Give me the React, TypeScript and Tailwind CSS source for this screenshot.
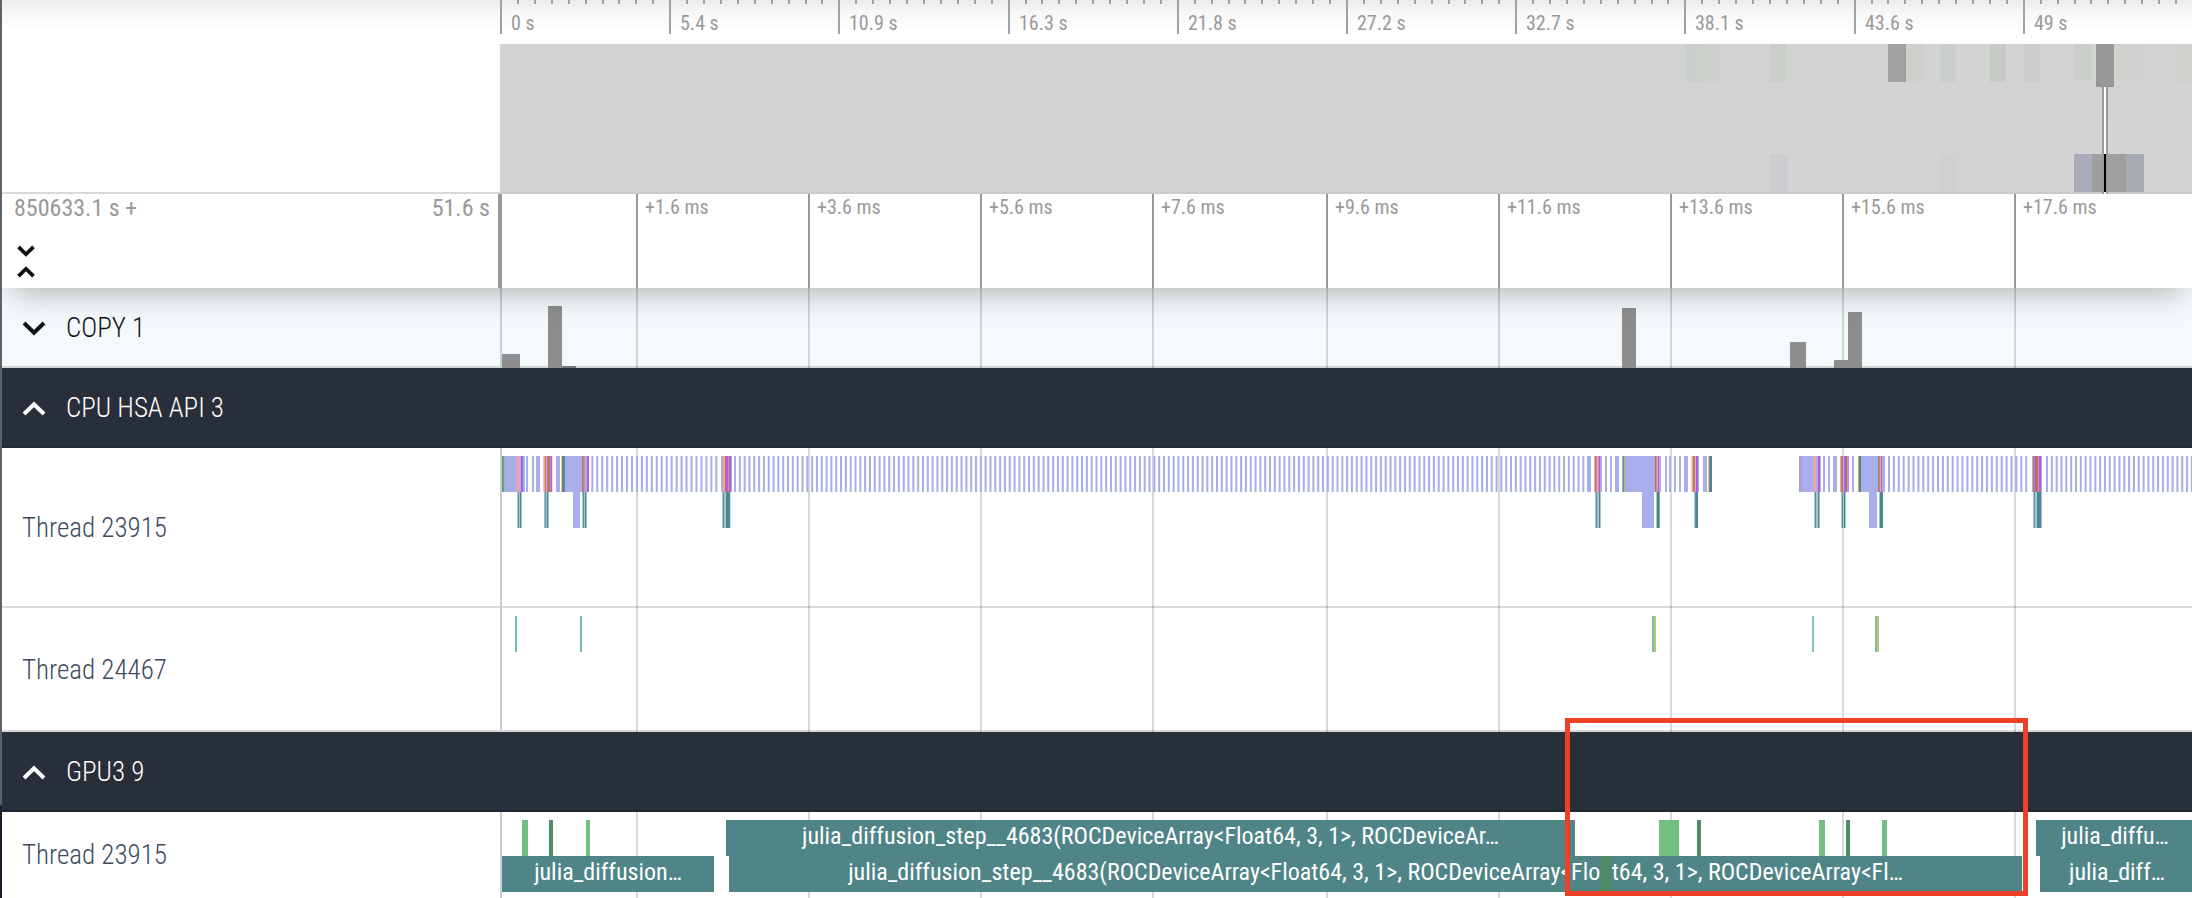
import type { ReactNode } from "react";

type Bar = { x: number; y: number; w: number; h: number; fill: string };

/* Horizontal positions are measured from the left edge of the timeline. */
const GRID = [0, 136, 308, 480, 652, 826, 998, 1170, 1342, 1514];

const RULER = ["0 s", "5.4 s", "10.9 s", "16.3 s", "21.8 s", "27.2 s", "32.7 s", "38.1 s", "43.6 s", "49 s"];
const RULER_STEP = 169.2;

const AXIS = [
  "+1.6 ms",
  "+3.6 ms",
  "+5.6 ms",
  "+7.6 ms",
  "+9.6 ms",
  "+11.6 ms",
  "+13.6 ms",
  "+15.6 ms",
  "+17.6 ms",
];

const bar = (x: number, y: number, w: number, h: number, fill: string): Bar => ({ x, y, w, h, fill });

const OVERVIEW: Bar[] = [
  bar(1186, 0, 16, 38, "#cacfcb"),
  bar(1202, 0, 18, 38, "#ced0cc"),
  bar(1270, 0, 16, 38, "#c8cec8"),
  bar(1388, 0, 18, 38, "#a1a1a1"),
  bar(1406, 0, 18, 38, "#cdd0cb"),
  bar(1440, 0, 16, 38, "#cacecc"),
  bar(1490, 0, 16, 38, "#c5ccc5"),
  bar(1524, 0, 16, 38, "#cacfcc"),
  bar(1574, 36, 70, 38, "#d1d3d2"),
  bar(1574, 0, 18, 36, "#c7cfc8"),
  bar(1614, 0, 12, 36, "#cfd1cd"),
  bar(1626, 0, 18, 36, "#d0d2d1"),
  bar(1676, 0, 16, 38, "#cfd1cd"),
  bar(1270, 110, 18, 38, "#cccdd0"),
  bar(1440, 110, 18, 38, "#d0d0d0"),
  bar(1574, 110, 18, 38, "#a9abbb"),
  bar(1592, 110, 34, 38, "#9f9f9f"),
  bar(1626, 110, 18, 38, "#a7aab5"),
  bar(1602, 43, 6, 107, "#999999"),
  bar(1604, 43, 2, 107, "#ffffff"),
  bar(1604, 110, 2, 38, "#000000"),
  bar(1596, 0, 18, 43, "#989898"),
];

const COPY: Bar[] = [
  bar(2, 66, 18, 14, "#8e8e8e"),
  bar(48, 18, 14, 62, "#8e8e8e"),
  bar(62, 78, 14, 2, "#777777"),
  bar(1122, 20, 14, 60, "#8e8e8e"),
  bar(1290, 54, 16, 26, "#8e8e8e"),
  bar(1334, 72, 14, 8, "#8e8e8e"),
  bar(1348, 24, 14, 56, "#8e8e8e"),
];

const LAV = "#a8adeb";
const PINK = "#e6a5b0";
const ROSE = "#d987b5";
const MAG = "#b05ddd";
const BROWN = "#b57a55";
const OLIVE = "#87854c";
const STEEL = "#5a94a8";
const MIST = "#a5c4cb";
const TEAL = "#4f888c";
const TOP = 8;
const H = 36;

/* A run of adjoining slices: [width, colour] pairs drawn side by side. */
const run = (x: number, y: number, parts: [number, string][]): Bar[] => {
  let at = x;
  return parts.map(([w, fill]) => {
    const b = bar(at, y, w, H, fill);
    at += w;
    return b;
  });
};

const sticks = (from: number, to: number, step: number): Bar[] =>
  Array.from({ length: Math.floor((to - from) / step) + 1 }, (_, i) => bar(from + i * step, TOP, 2, H, LAV));

const single = (xs: number[], w: number): Bar[] => xs.map((x) => bar(x, TOP, w, H, LAV));

const CPU_A: Bar[] = [
  ...run(2, TOP, [[1, OLIVE], [1, "#62a393"], [1, "#7cc3b9"], [11, LAV], [2, "#dba4c2"], [2, PINK], [1, LAV], [1, MAG], [1, "#9a6be0"], [2, LAV]]),
  ...single([26, 32], 2),
  ...single([36], 4),
  ...run(43, TOP, [[1, "#efc4cc"], [1, PINK], [1, BROWN], [1, PINK], [1, "#c66bb0"], [1, BROWN], [1, OLIVE], [1, ROSE], [1, MAG], [1, "#eed3f3"]]),
  ...single([56], 4),
  ...run(61, TOP, [[1, "#d9cfa5"], [1, OLIVE], [1, "#58808a"], [1, STEEL], [17, LAV], [1, BROWN], [1, "#c08468"], [1, ROSE], [1, LAV], [1, LAV], [1, "#9a6be0"], [1, MAG]]),
  ...sticks(91.3, 218, 4.96),
  ...run(221, TOP, [[1, LAV], [1, "#c8a3d6"], [2, PINK], [1, BROWN], [1, "#c65bb8"], [1, MAG], [1, ROSE], [2, MAG], [1, LAV]]),
  ...sticks(234, 1083, 4.82),
  ...single([1087], 4),
  ...run(1094, TOP, [[1, PINK], [1, BROWN], [1, "#d58f80"], [1, PINK], [1, ROSE], [1, MAG], [2, LAV]]),
  ...single([1105, 1110], 2),
  ...single([1115], 4),
  ...run(1122, TOP, [[1, "#85bab8"], [1, STEEL], [1, "#c4b552"], [30, LAV], [1, BROWN], [1, "#d58f80"], [1, PINK], [1, MAG], [2, LAV]]),
  ...single([1165, 1169, 1174, 1179], 2),
  ...single([1184], 4),
  ...run(1191, TOP, [[1, "#f0cfd6"], [1, PINK], [1, BROWN], [1, "#c08468"], [1, PINK], [1, MAG], [1, "#9a6be0"], [1, LAV]]),
  ...single([1203], 4),
  ...run(1208, TOP, [[1, "#d4cdb2"], [1, OLIVE], [2, "#4f819e"]]),
  ...run(1299, TOP, [[1, "#80b6c4"], [2, "#c394e2"], [11, LAV], [3, PINK], [2, LAV], [2, MAG], [1, LAV]]),
  ...single([1323, 1328], 2),
  ...single([1333], 4),
  ...run(1340, TOP, [[1, PINK], [1, "#c08468"], [1, BROWN], [1, PINK], [1, MAG], [1, "#9a6be0"], [1, OLIVE], [2, "#cd8ae6"]]),
  ...single([1352], 2),
  ...run(1358, TOP, [[1, "#b3ad7c"], [1, OLIVE], [1, "#4f819e"], [17, LAV], [1, BROWN], [1, "#c08468"], [1, PINK], [1, MAG], [3, LAV]]),
  ...sticks(1388, 1529, 4.9),
  ...run(1532, TOP, [[1, LAV], [1, BROWN], [1, "#c08468"], [1, MAG], [1, "#c65b70"], [1, BROWN], [1, ROSE], [2, MAG], [1, LAV]]),
  ...sticks(1546, 1692, 4.83),
];

const pair = (x: number): Bar[] =>
  run(x, TOP + H, [[1, MIST], [1, STEEL], [1, MIST], [1, TEAL], [1, MIST]]);

const CPU_B: Bar[] = [
  ...pair(17),
  ...pair(44),
  bar(73, TOP + H, 7, H, LAV),
  ...pair(82),
  ...run(222, TOP + H, [[1, MIST], [1, STEEL], [2, MIST], [4, TEAL], [1, "#d5e3e4"]]),
  ...run(1095, TOP + H, [[1, MIST], [1, STEEL], [2, MIST], [1, TEAL], [1, MIST]]),
  bar(1142, TOP + H, 12, H, LAV),
  ...run(1156, TOP + H, [[1, MIST], [2, TEAL], [1, "#7fa6a8"]]),
  ...run(1194, TOP + H, [[1, MIST], [1, STEEL], [2, TEAL]]),
  ...run(1314, TOP + H, [[1, MIST], [1, STEEL], [2, MIST], [1, TEAL], [1, MIST]]),
  ...pair(1341),
  bar(1369, TOP + H, 8, H, LAV),
  ...run(1379, TOP + H, [[1, MIST], [3, TEAL]]),
  ...run(1533, TOP + H, [[1, MIST], [1, STEEL], [2, MIST], [4, TEAL], [1, MIST]]),
];

const THREAD_2: Bar[] = [
  bar(15, TOP, 2, H, "#74bdb3"),
  bar(80, TOP, 2, H, "#74bdb3"),
  bar(1152, TOP, 2, H, "#7abcae"),
  bar(1154, TOP, 2, H, "#b9c46c"),
  bar(1312, TOP, 2, H, "#84c6be"),
  bar(1375, TOP, 2, H, "#7abcae"),
  bar(1377, TOP, 2, H, "#c3c36c"),
];

const GREEN = "#70bf81";
const DARK_GREEN = "#4f8d68";

const GPU: Bar[] = [
  bar(22, TOP, 6, H, GREEN),
  bar(49, TOP, 4, H, DARK_GREEN),
  bar(86, TOP, 4, H, GREEN),
  bar(1159, TOP, 20, H, GREEN),
  bar(1197, TOP, 4, H, DARK_GREEN),
  bar(1319, TOP, 6, H, GREEN),
  bar(1346, TOP, 4, H, DARK_GREEN),
  bar(1382, TOP, 5, H, GREEN),
];

const SLICES = [
  { x: 226, y: 8, w: 849, name: "julia_diffusion_step__4683(ROCDeviceArray<Float64, 3, 1>, ROCDeviceAr…" },
  { x: 1536, y: 8, w: 158, name: "julia_diffu…" },
  { x: 2, y: 44, w: 212, name: "julia_diffusion…" },
  {
    x: 229,
    y: 44,
    w: 1293,
    name: "julia_diffusion_step__4683(ROCDeviceArray<Float64, 3, 1>, ROCDeviceArray<Float64, 3, 1>, ROCDeviceArray<Fl…",
  },
  { x: 1540, y: 44, w: 154, name: "julia_diff…" },
];

function Bars({ bars }: { bars: Bar[] }) {
  return (
    <>
      {bars.map((b, i) => (
        <rect key={i} x={b.x} y={b.y} width={b.w} height={b.h} fill={b.fill} />
      ))}
    </>
  );
}

function Canvas({ bars, grid = true }: { bars: Bar[]; grid?: boolean }) {
  return (
    <svg className="block h-full w-full" aria-hidden="true">
      {grid &&
        GRID.map((x) => (
          <rect key={x} x={x} y={0} width={2} height="100%" fill={x === 0 ? "#c8ced7" : "#000000"} fillOpacity={x === 0 ? 1 : 0.15} />
        ))}
      <Bars bars={bars} />
    </svg>
  );
}

function Chevron({ up = false, small = false }: { up?: boolean; small?: boolean }) {
  return (
    <svg
      className={small ? "h-[12px] w-[18px]" : "h-[15px] w-[24px]"}
      viewBox="0 0 24 15"
      fill="none"
      stroke="currentColor"
      strokeWidth={small ? 5 : 4}
      aria-hidden="true"
    >
      <path d={up ? "M2 13 12 3.2 22 13" : "M2 2 12 11.8 22 2"} />
    </svg>
  );
}

function Group({ name, open, children }: { name: string; open: boolean; children?: ReactNode }) {
  return (
    <section
      className={
        open
          ? "flex h-20 border-b-2 border-[#212833] bg-[#282e3a] text-white"
          : "relative flex h-20 bg-[#f4fafb] text-[#121212]"
      }
    >
      <button
        type="button"
        aria-expanded={open}
        className={
          open
            ? "flex w-[498px] shrink-0 items-center gap-5 pt-[2px] pl-5 text-left text-[27px] font-light"
            : "flex w-[498px] shrink-0 items-center gap-5 border-b-2 border-[#d0d5d6] pt-[2px] pl-5 text-left text-[27px] font-light"
        }
      >
        <Chevron up={open} />
        <span>{name}</span>
      </button>
      {!open && <div className="min-w-0 flex-1 bg-[linear-gradient(to_top,#d0d5d6_2px,transparent_2px)]">{children}</div>}
    </section>
  );
}

function Track({ name, className, children }: { name: string; className: string; children: ReactNode }) {
  return (
    <section className={`flex ${className}`}>
      <h2 className="flex w-[498px] shrink-0 items-center pl-5 text-[27px] font-light text-[#3c4b5d]">{name}</h2>
      <div className="relative min-w-0 flex-1 overflow-hidden">{children}</div>
    </section>
  );
}

export default function App() {
  return (
    <div className="flex min-h-screen overflow-hidden bg-white font-['Roboto_Condensed',Roboto,sans-serif]">
      <div className="w-[2px] shrink-0 bg-[linear-gradient(to_bottom,#5d616c_804px,#171e2c_806px)]" />
      <main className="relative min-w-0 flex-1 overflow-hidden">
        <header className="relative z-10 bg-white shadow-[0_14px_30px_-10px_rgba(0,0,0,0.3)]">
          <div className="flex h-[194px] border-b-2 border-[#d9d9d9] bg-[linear-gradient(to_bottom,#ebebeb_0,#f7f7f7_12px,#ffffff_30px)]">
            <div className="w-[498px] shrink-0" />
            <div className="-mb-[2px] flex min-w-0 flex-1 flex-col">
              <div className="relative h-11 shrink-0 overflow-hidden text-[20px] leading-6 text-[#999999]">
                <svg className="block h-full w-full" aria-hidden="true">
                  {Array.from({ length: 101 }, (_, i) => (
                    <rect
                      key={i}
                      x={Math.round((i * RULER_STEP) / 10)}
                      y={0}
                      width={2}
                      height={i % 10 === 0 ? 34 : 4}
                      fill="#a2a2a2"
                    />
                  ))}
                </svg>
                {RULER.map((t, i) => (
                  <span key={t} className="absolute top-[11px] whitespace-nowrap" style={{ left: Math.round(i * RULER_STEP) + 11 }}>
                    {t}
                  </span>
                ))}
              </div>
              <div className="min-h-0 flex-1 bg-[linear-gradient(to_top,#cbcbcb_2px,#d3d3d3_2px)]">
                <Canvas bars={OVERVIEW} grid={false} />
              </div>
            </div>
          </div>
          <div className="flex h-[94px] text-[#999999]">
            <div className="flex w-[500px] shrink-0 flex-col justify-between border-r-4 border-[#999999] pb-[10px]">
              <div className="flex justify-between pr-[8px] pl-3 text-[24px] leading-7">
                <span>850633.1 s +</span>
                <span>51.6 s</span>
              </div>
              <button type="button" aria-label="Expand or collapse all" className="ml-[15px] flex w-[18px] flex-col gap-[9px] text-[#121212]">
                <Chevron small />
                <Chevron up small />
              </button>
            </div>
            <div className="relative -ml-[2px] min-w-0 flex-1 overflow-hidden text-[20px] leading-6">
              <svg className="block h-full w-full" aria-hidden="true">
                {GRID.slice(1).map((x) => (
                  <rect key={x} x={x} y={0} width={2} height="100%" fill="#999999" />
                ))}
              </svg>
              {AXIS.map((t, i) => (
                <span key={t} className="absolute top-[1px] whitespace-nowrap" style={{ left: GRID[i + 1] + 9 }}>
                  {t}
                </span>
              ))}
            </div>
          </div>
        </header>

        <Group name="COPY 1" open={false}>
          <Canvas bars={COPY} />
        </Group>
        <Group name="CPU HSA API 3" open />
        <Track name="Thread 23915" className="h-[160px] bg-[linear-gradient(to_top,#d9d9d9_2px,#ffffff_2px)]">
          <Canvas bars={[...CPU_A, ...CPU_B]} />
        </Track>
        <Track name="Thread 24467" className="h-[124px] bg-[linear-gradient(to_top,#d9d9d9_2px,#ffffff_2px)]">
          <Canvas bars={THREAD_2} />
        </Track>
        <Group name="GPU3 9" open />
        <Track name="Thread 23915" className="h-[86px] bg-white">
          <Canvas bars={GPU} />
          {SLICES.map((s, i) => (
            <div
              key={i}
              className="absolute h-9 overflow-hidden bg-[#4f8587] text-center text-[24px] leading-8 whitespace-nowrap text-white"
              style={{ left: s.x, top: s.y, width: s.w }}
            >
              {s.name}
            </div>
          ))}
          <div className="absolute top-11 left-[1100px] h-9 w-[11px] bg-[#4f8a68]" />
        </Track>

        <div className="absolute top-[718px] left-[1563px] z-20 h-[178px] w-[463px] border-5 border-[#ee4026]" />
      </main>
    </div>
  );
}
